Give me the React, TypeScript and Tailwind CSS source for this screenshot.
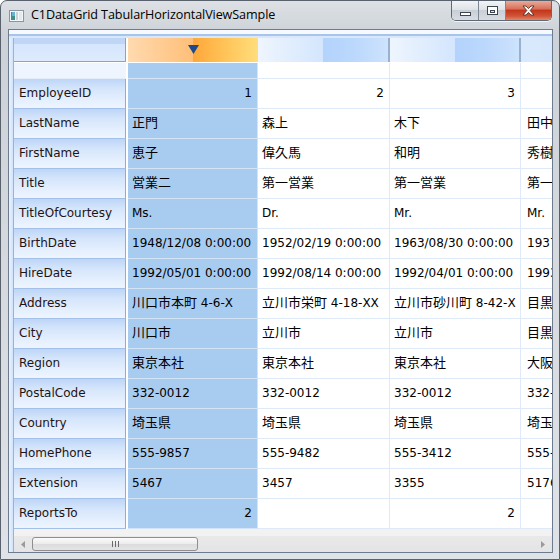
import React from 'react';

const rowNames = [
  'EmployeeID',
  'LastName',
  'FirstName',
  'Title',
  'TitleOfCourtesy',
  'BirthDate',
  'HireDate',
  'Address',
  'City',
  'Region',
  'PostalCode',
  'Country',
  'HomePhone',
  'Extension',
  'ReportsTo',
];

// one array per employee, in the order of rowNames
const employees: string[][] = [
  ['1', '正門', '恵子', '営業二', 'Ms.', '1948/12/08 0:00:00', '1992/05/01 0:00:00', '川口市本町 4-6-X', '川口市', '東京本社', '332-0012', '埼玉県', '555-9857', '5467', '2'],
  ['2', '森上', '偉久馬', '第一営業', 'Dr.', '1952/02/19 0:00:00', '1992/08/14 0:00:00', '立川市栄町 4-18-XX', '立川市', '東京本社', '332-0012', '埼玉県', '555-9482', '3457', ''],
  ['3', '木下', '和明', '第一営業', 'Mr.', '1963/08/30 0:00:00', '1992/04/01 0:00:00', '立川市砂川町 8-42-X', '立川市', '東京本社', '332-0012', '埼玉県', '555-3412', '3355', '2'],
  ['4', '田中', '秀樹', '第一営業', 'Mr.', '1937/09/19 0:00:00', '1993/05/03 0:00:00', '目黒区祐天寺 2-9-X', '目黒区', '大阪支社', '332-0012', '埼玉県', '555-8122', '5176', '2'],
];

const numericRows = new Set(['EmployeeID', 'ReportsTo']);

const CJK = /([\u3000-\u9fff\uff00-\uffef]+)/;

// CJK runs are set a little larger, like Meiryo's full-width glyphs
const CellText: React.FC<{ value: string }> = ({ value }) => (
  <span className="whitespace-pre">
    {value.split(CJK).map((part, i) =>
      CJK.test(part) ? (
        <span key={i} className="text-[13px]">
          {part}
        </span>
      ) : (
        <React.Fragment key={i}>{part}</React.Fragment>
      )
    )}
  </span>
);

const TitleBar: React.FC = () => (
  <div className="h-[28px] shrink-0 flex items-start relative">
    {/* app icon */}
    <svg className="mt-[9px] ml-[8px]" width="15" height="12" viewBox="0 0 15 12">
      <rect x="0.5" y="0.5" width="14" height="11" fill="#f4f6f8" stroke="#8c949c" />
      <rect x="2" y="2" width="4" height="8" fill="#3f8f8a" />
      <rect x="3" y="2" width="3" height="4" fill="#67b5d6" />
      <rect x="7" y="2" width="2" height="8" fill="#c8d3dc" />
      <rect x="10" y="2" width="3" height="8" fill="#e3e9ee" />
    </svg>
    <div className="ml-[7px] mt-[6px] text-[12.6px] leading-[16px] text-black font-['Open_Sans',sans-serif] tracking-[-0.1px]">
      C1DataGrid TabularHorizontalViewSample
    </div>

    {/* caption buttons */}
    <div className="absolute top-0 right-[7px] flex h-[20px] rounded-b-[5px] border border-t-0 border-[#5f6a76] overflow-hidden shadow-[0_1px_0_rgba(255,255,255,0.7)]">
      <div className="w-[27px] border-r border-[#7c8793] bg-[linear-gradient(to_bottom,#f2f4f6_0%,#dfe3e7_45%,#c9cfd6_50%,#d8dde3_100%)] flex items-center justify-center">
        <div className="mt-[6px] w-[11px] h-[4px] bg-white border border-[#3d4650]" />
      </div>
      <div className="w-[27px] border-r border-[#7c8793] bg-[linear-gradient(to_bottom,#f2f4f6_0%,#dfe3e7_45%,#c9cfd6_50%,#d8dde3_100%)] flex items-center justify-center">
        <div className="w-[11px] h-[9px] border border-[#3d4650] bg-white flex items-center justify-center">
          <div className="w-[5px] h-[3px] mt-[1px] border border-[#3d4650] bg-[#dfe3e7]" />
        </div>
      </div>
      <div className="w-[45px] bg-[linear-gradient(to_bottom,#eaa99a_0%,#d9735c_40%,#c5371b_50%,#d0553a_80%,#e08a66_100%)] flex items-center justify-center">
        <svg width="13" height="11" viewBox="0 0 13 11">
          <path
            d="M1 1 L4 1 L6.5 3.6 L9 1 L12 1 L8.2 5.5 L12 10 L9 10 L6.5 7.4 L4 10 L1 10 L4.8 5.5 Z"
            fill="#ffffff"
            stroke="#5a2a1e"
            strokeWidth="0.9"
            strokeLinejoin="round"
          />
        </svg>
      </div>
    </div>
  </div>
);

const colWidths = ['w-[130px]', 'w-[132px]', 'w-[131px]', 'w-[131px]'];

const HeaderRow: React.FC = () => (
  <div className="flex h-[25px] shrink-0 border-b border-white">
    <div className="w-[114px] shrink-0 flex border-r-2 border-white">
      <div className="flex-1 border-r border-b border-[#7fa4d9] bg-[linear-gradient(to_bottom,#bfd6f7_0%,#bfd6f7_25%,#d5e5fc_25%,#deebfd_100%)]" />
    </div>
    <div className="w-[130px] shrink-0 flex items-center justify-center bg-[linear-gradient(to_right,#ffdab0_0%,#ffbf78_50%,#ffa73a_50%,#ffc458_75%,#ffde7c_100%)]">
      <svg width="11" height="9" viewBox="0 0 11 9" className="mt-[-1px]">
        <path d="M0 0 L11 0 L5.5 9 Z" fill="#1d4a8c" />
      </svg>
    </div>
    {[1, 2].map((ci) => (
      <div
        key={ci}
        className={
          colWidths[ci] +
          ' shrink-0 border-r-2 border-[#9ab0cf] bg-[linear-gradient(to_right,#eef5fe_0%,#d4e6fd_50%,#b3d3fc_50%,#bcd8fc_75%,#cde3fd_100%)]'
        }
      />
    ))}
    <div className="w-[131px] shrink-0 bg-[linear-gradient(to_right,#d9e9fd_0%,#d4e6fd_50%,#b3d3fc_50%,#cde3fd_100%)]" />
  </div>
);

const FilterRow: React.FC = () => (
  <div className="flex h-[16px] shrink-0">
    <div className="w-[114px] shrink-0 flex border-r-2 border-white">
      <div className="flex-1 bg-[#eff5fe] border-b border-[#e2ecfa]" />
    </div>
    <div className="w-[130px] shrink-0 bg-[#a8cbf0] border-r border-b border-[#d6e6f8]" />
    {[1, 2, 3].map((ci) => (
      <div key={ci} className={colWidths[ci] + ' shrink-0 bg-white border-r border-b border-[#dfeaf8]'} />
    ))}
  </div>
);

const DataRow: React.FC<{ name: string; ri: number }> = ({ name, ri }) => {
  const numeric = numericRows.has(name);
  return (
    <div className="flex h-[30px] shrink-0">
      <div className="w-[114px] shrink-0 flex border-r-2 border-white">
        <div className="flex-1 flex items-center pl-[5px] pb-[1px] border-r border-r-[#8aaddf] border-b border-b-[#a3c0e8] bg-[linear-gradient(to_bottom,#bdd5f7_0%,#d3e4fb_30%,#e4effe_70%,#edf5ff_100%)] text-[#1e1414] whitespace-nowrap">
          {name}
        </div>
      </div>
      {employees.map((emp, ci) => (
        <div
          key={ci}
          className={
            (ci === 0
              ? 'bg-[#a8cbf0] border-[#d3e4f7] '
              : 'bg-white border-[#dfeaf8] ') +
            colWidths[ci] +
            ' shrink-0 flex items-center pb-[1px] border-r border-b whitespace-nowrap overflow-hidden ' +
            (numeric ? 'justify-end pr-[5px]' : ci === 3 ? 'pl-[6px]' : 'pl-[4px]')
          }
        >
          <CellText value={emp[ri]} />
        </div>
      ))}
    </div>
  );
};

const HScrollBar: React.FC = () => (
  <div className="h-[23px] shrink-0 flex items-stretch bg-[linear-gradient(to_bottom,#f2f2f2_0%,#f2f2f2_30%,#e9e9e9_30%,#e4e4e4_100%)]">
    <div className="w-[18px] shrink-0 flex items-center justify-center pt-[7px]">
      <svg width="4" height="7" viewBox="0 0 4 7">
        <path d="M4 0 L0 3.5 L4 7 Z" fill="#9a9a9a" />
      </svg>
    </div>
    <div className="flex-1 flex items-end pb-[1px]">
      <div className="w-[166px] h-[14px] rounded-[3px] border border-[#8e8e8e] bg-[linear-gradient(to_bottom,#fbfbfb_0%,#ececec_50%,#dcdcdc_51%,#e4e4e4_100%)] flex items-center justify-center gap-[2px]">
        <div className="w-[1px] h-[6px] bg-[#6a6a6a]" />
        <div className="w-[1px] h-[6px] bg-[#6a6a6a]" />
        <div className="w-[1px] h-[6px] bg-[#6a6a6a]" />
      </div>
    </div>
    <div className="w-[18px] shrink-0 flex items-center justify-center pt-[7px]">
      <svg width="4" height="7" viewBox="0 0 4 7">
        <path d="M0 0 L4 3.5 L0 7 Z" fill="#9a9a9a" />
      </svg>
    </div>
  </div>
);

export default function App() {
  return (
    <div className="w-[560px] h-[560px] flex flex-col overflow-hidden rounded-t-[7px] border border-[#59626c] bg-[linear-gradient(to_bottom,#dde1e5_0%,#cdd2d8_6%,#d6dadf_50%,#dfe2e6_100%)]">
      <TitleBar />
      <div className="flex-1 min-h-0 ml-[7px] mr-[6px] mb-[6px] flex flex-col border border-[#6c7b8e] bg-white overflow-hidden">
        {/* grid top band */}
        <div className="h-[8px] shrink-0 bg-[linear-gradient(to_bottom,#f6f9fe_0%,#f6f9fe_45%,#a6c4ec_45%,#a6c4ec_70%,#d9e7fb_70%)]" />
        <div className="flex-1 min-h-0 flex">
          {/* grid left band */}
          <div className="w-[5px] shrink-0 bg-[linear-gradient(to_right,#eaf2fd_0%,#d2e3fa_78%,#93b4e2_78%)]" />
          <div className="flex-1 min-w-0 flex flex-col overflow-hidden text-[12px] leading-[16px] text-black font-['DejaVu_Sans','Noto_Sans_CJK_JP',sans-serif]">
            <HeaderRow />
            <FilterRow />
            {rowNames.map((name, ri) => (
              <DataRow key={name} name={name} ri={ri} />
            ))}
            <HScrollBar />
          </div>
        </div>
      </div>
    </div>
  );
}
